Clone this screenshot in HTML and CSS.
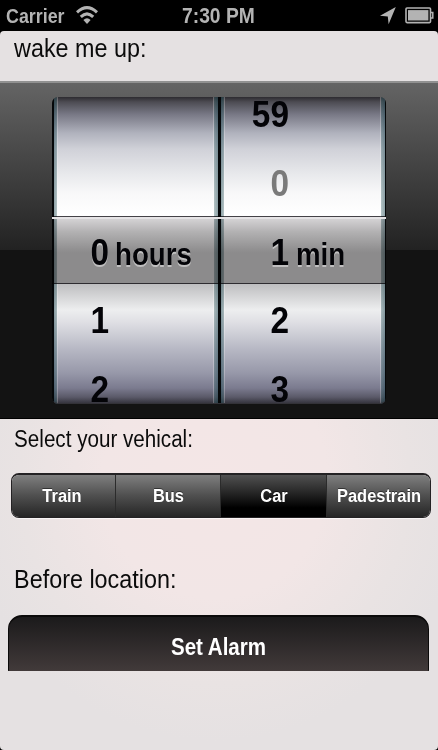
FILE: index.html
```html
<!DOCTYPE html>
<html lang="en">
<head>
<meta charset="utf-8">
<title>Alarm</title>
<link rel="stylesheet" href="styles.css">
</head>
<body>
<header class="status">
  <span class="text carrier">Carrier</span>
  <svg class="wifi" width="22" height="18" viewBox="0 0 22 18">
    <g fill="none" stroke="#b3b3b3" stroke-width="3">
      <path d="M1 6.4Q11 -3 21 6.4"/>
      <path d="M4.8 10.9Q11 4.8 17.2 10.9"/>
    </g>
    <path d="M7.4 13.9Q11 10.4 14.6 13.9L11 18Z" fill="#b3b3b3"/>
  </svg>
  <span class="text clock">7:30 PM</span>
  <svg class="arrow" width="16" height="18" viewBox="0 0 16 18"><path d="M15.8 0L8.6 17.2L7.8 9.4L0 8.8Z" fill="#b3b3b3"/></svg>
  <svg class="battery" width="30" height="17" viewBox="0 0 30 17">
    <rect x="1" y="1" width="24.5" height="14.6" rx="1" fill="none" stroke="#b3b3b3" stroke-width="1.6"/>
    <rect x="3" y="3.1" width="20.4" height="10.4" fill="#b3b3b3"/>
    <path d="M26 5.5h1.8v5.4H26" fill="none" stroke="#b3b3b3" stroke-width="1.5"/>
  </svg>
</header>
<main class="screen">
  <h1 class="text title">wake me up:</h1>
  <section class="picker">
    <div class="wheels">
      <div class="wheel hours"></div>
      <div class="wheel minutes"></div>
      <div class="selection"></div>
      <div class="values">
        <div class="column">
          <div class="row"></div>
          <div class="row"></div>
          <div class="row current"><span class="digit">0</span><span class="unit">hours</span></div>
          <div class="row"><span class="digit">1</span></div>
          <div class="row"><span class="digit">2</span></div>
        </div>
        <div class="column">
          <div class="row"><span class="digit">59</span></div>
          <div class="row"><span class="digit dim">0</span></div>
          <div class="row current"><span class="digit">1</span><span class="unit">min</span></div>
          <div class="row"><span class="digit">2</span></div>
          <div class="row"><span class="digit">3</span></div>
        </div>
      </div>
      <div class="shade"></div>
    </div>
  </section>
  <h2 class="text vehicle">Select your vehical:</h2>
  <nav class="segments">
    <button class="segment"><span>Train</span></button>
    <button class="segment"><span>Bus</span></button>
    <button class="segment active"><span>Car</span></button>
    <button class="segment"><span>Padestrain</span></button>
  </nav>
  <h2 class="text location">Before location:</h2>
  <div class="alarm-clip"><button class="alarm"><span>Set Alarm</span></button></div>
</main>
</body>
</html>
```
FILE: styles.css
```css
* { box-sizing: border-box; }
body {
  margin: 0;
  width: 438px;
  height: 750px;
  overflow: hidden;
  background: #000;
  color: #0b0b0b;
  font-family: "Liberation Sans", Arial, sans-serif;
}
button {
  padding: 0;
  border: 0;
  font: inherit;
}
.text {
  margin: 0;
  display: block;
  font-weight: 400;
  white-space: nowrap;
  transform: scaleX(.88);
  transform-origin: 0 50%;
}

.status {
  display: flex;
  height: 31px;
  padding-left: 6px;
  color: #b3b3b3;
}
.status .text { font-weight: 700; line-height: 32px; }
.status .carrier { width: 70px; font-size: 20.3px; }
.wifi { margin-top: 6px; }
.status .clock { width: 198px; margin-left: 84px; font-size: 21.9px; line-height: 31px; }
.arrow { margin-top: 7px; }
.battery { margin: 7px 0 0 9px; }
.status svg { flex: none; }

.screen {
  height: 719px;
  border-radius: 4px;
  overflow: hidden;
  background: radial-gradient(ellipse 250px 260px at 215px 450px, #f4e6e6 0, #f2e6e6 45%, #e9e3e3 78%, #e5e1e2 100%);
}
.title {
  height: 50px;
  padding-left: 16px;
  font-size: 26.56px;
  line-height: 35px;
}

.picker {
  height: 338px;
  padding: 14px 52px 0;
  border-top: 2px solid #919191;
  border-bottom: 1px solid #000;
  background: linear-gradient(#646464 0, #222 167px, #131313 167px, #131313 100%);
}
.wheels {
  position: relative;
  display: grid;
  grid-template-columns: 167px 167px;
  height: 307px;
  overflow: hidden;
  border-radius: 6px;
}
.wheel {
  border: solid #050709;
  border-width: 0 1px 0 2px;
  background:
    linear-gradient(90deg, rgba(30,70,80,.5) 0, rgba(60,100,105,.38) 3px, rgba(255,255,255,.25) 3px, rgba(255,255,255,.25) 4px, transparent 4px, transparent calc(100% - 5px), rgba(255,255,255,.25) calc(100% - 5px), rgba(255,255,255,.25) calc(100% - 4px), rgba(60,100,105,.38) calc(100% - 4px), rgba(30,70,80,.5) 100%),
    linear-gradient(#2d2b30 0, #4d4c53 5px, #777784 17px, #b0b2bd 36px, #d0d1d8 52px, #e7e8eb 76px, #f8f8f9 96px, #fff 118px, #fff 186px, #bebec0 187px, #edeeef 213px, #dedee3 226px, #b7b8c4 252px, #9798a9 276px, #7b7b8f 291px, #5b5a69 300px, #302f38 307px);
}
.selection {
  position: absolute;
  left: 0;
  top: 119px;
  width: 100%;
  height: 68px;
  border-top: 1px solid #444247;
  border-bottom: 1px solid #343237;
  background: linear-gradient(#d9d7d9 0, #b2b1b2 15px, #929192 32px, #8c8b8c 36px, #8c8b8c 100%);
  mix-blend-mode: multiply;
}
.values {
  position: absolute;
  inset: -17px 0 auto;
  display: grid;
  grid-template-columns: 167px 167px;
  color: #030307;
  font-weight: 700;
}
.row {
  display: flex;
  align-items: baseline;
  height: 68.75px;
  font-size: 37.5px;
  line-height: 68.75px;
}
.digit {
  flex: none;
  width: 57px;
  text-align: right;
  transform: scaleX(.89);
  transform-origin: 100% 50%;
}
.column + .column .digit { width: 70px; }
.dim { color: #7a7a7a; }
.unit {
  margin-left: 6px;
  font-size: 31.25px;
  transform: scaleX(.885);
  transform-origin: 0 50%;
}
.column + .column .unit { margin-left: 7px; }
.current { text-shadow: 0 1.5px rgba(255,255,255,.45); }
.shade {
  position: absolute;
  inset: 0;
  border-bottom: 1px solid #333238;
  border-radius: 6px;
  background: linear-gradient(#e6e4e6, #e6e4e6) 0 120px / 100% 2px no-repeat;
}

.vehicle {
  height: 55px;
  padding-left: 16px;
  font-size: 23.44px;
  line-height: 41px;
}
.segments {
  display: grid;
  grid-template-columns: 103px 105px 106px 104px;
  height: 45px;
  margin: -1px 0 0 11px;
  width: 420px;
  border: 1px solid #242224;
  border-top-width: 2px;
  border-radius: 8px;
  overflow: hidden;
  box-shadow: 0 1px #fff9;
}
.segment {
  color: #fff;
  font-size: 18.75px;
  font-weight: 700;
  background: linear-gradient(#7f7f7f, #505050 48%, #252525);
  text-shadow: 0 -1px #0007;
}
.segment + .segment { border-left: 1px solid #2b2b2b; }
.segment.active { background: linear-gradient(#515151, #202020 48%, #000 78%); }
.segment span, .alarm span {
  display: block;
  white-space: nowrap;
  transform: scaleX(.876);
}
.segment span { margin: 0 -8px 0 -9px; }
.segment:first-child span { margin-left: -11px; }
.location {
  height: 97px;
  padding: 43px 0 0 16px;
  font-size: 26.56px;
  line-height: 37px;
}
.alarm-clip {
  height: 56px;
  margin: 0 8px;
  overflow: hidden;
}
.alarm {
  width: 421px;
  height: 68px;
  padding-bottom: 5px;
  border: 1px solid #0b0a0a;
  border-top-width: 2px;
  border-radius: 14px;
  background: linear-gradient(#1b1a1b, #433b3b 56px);
  color: #fff;
  font-size: 23.44px;
  font-weight: 700;
}
.segment:nth-child(n+2) span { margin-right: -10px; }
```
